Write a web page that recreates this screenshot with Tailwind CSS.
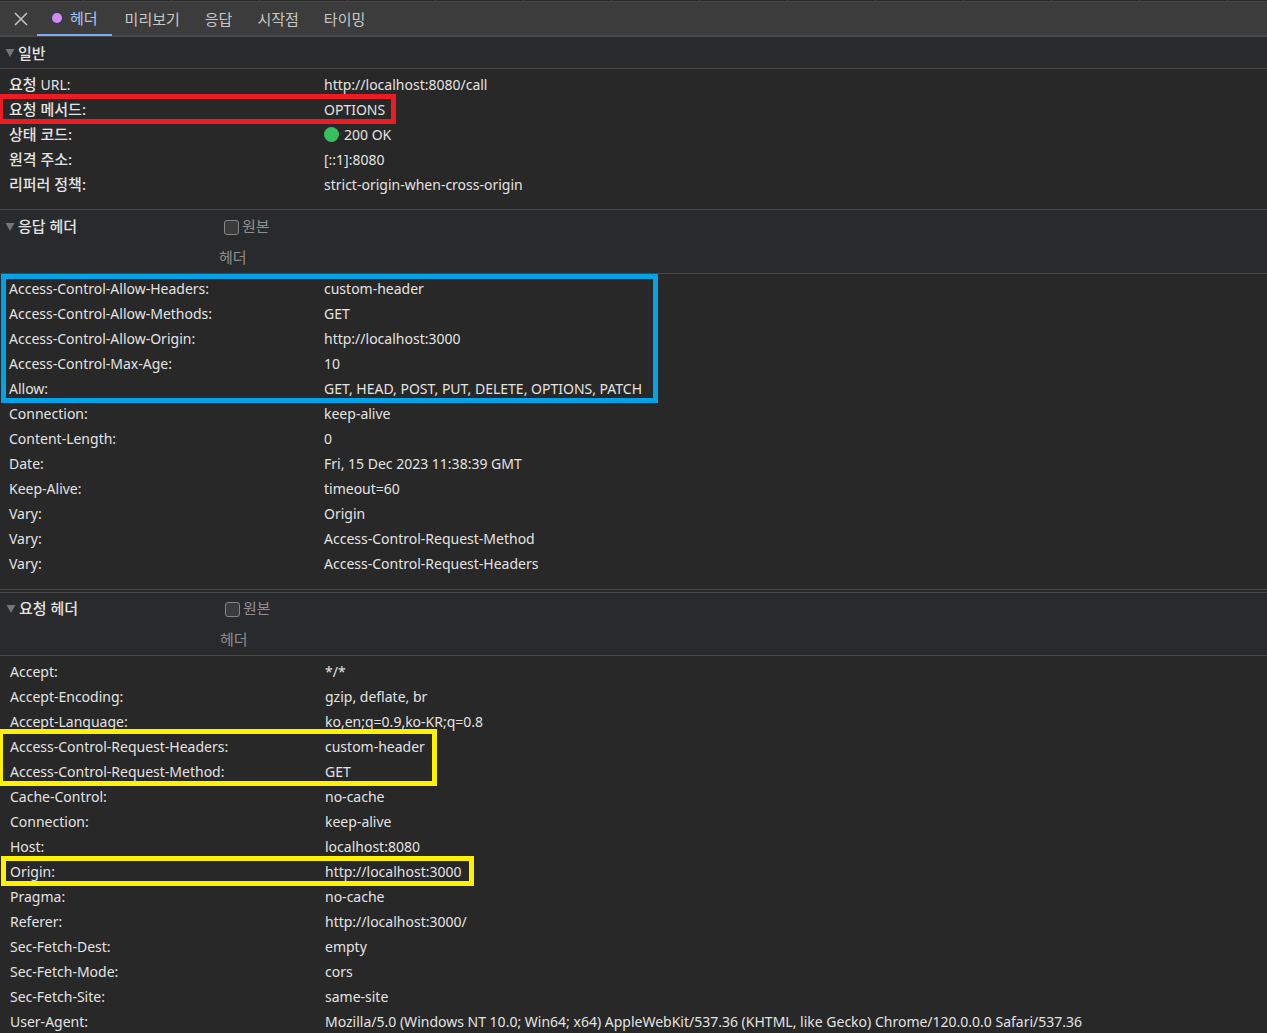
<!DOCTYPE html>
<html lang="ko">

<head>
    <meta charset="UTF-8">
    <meta name="viewport" content="width=device-width, initial-scale=1.0">
    <title>헤더 - 네트워크</title>
    <script src="https://cdn.jsdelivr.net/npm/@tailwindcss/browser@4"></script>
</head>

<body class="h-screen overflow-hidden bg-[#282828] text-[#e3e3e3] text-[15px] font-['Noto_Sans','Noto_Sans_CJK_KR',sans-serif]">
    <!-- Column edges of the request list above -->
    <div class="h-px flex gap-[87px] pl-[83px]">
        <span class="w-px bg-[#474747]"></span>
        <span class="w-px bg-[#474747]"></span>
        <span class="w-px bg-[#474747]"></span>
        <span class="w-px bg-[#474747]"></span>
        <span class="w-px bg-[#474747]"></span>
        <span class="w-px bg-[#474747]"></span>
        <span class="w-px bg-[#474747]"></span>
        <span class="w-px bg-[#474747]"></span>
        <span class="w-px bg-[#474747]"></span>
        <span class="w-px bg-[#474747]"></span>
        <span class="w-px bg-[#474747]"></span>
        <span class="w-px bg-[#474747]"></span>
        <span class="w-px bg-[#474747]"></span>
        <span class="w-px bg-[#474747]"></span>
    </div>

    <!-- Tabs -->
    <nav class="h-9 flex items-stretch gap-px border-t border-b-2 border-[#474747] bg-[#3c3c3c] text-[#c7c7c7] font-['Noto_Sans_CJK_KR',sans-serif]">
        <button aria-label="닫기" class="w-9 pl-[5px] flex items-center justify-center">
            <svg class="w-4 h-4" viewBox="0 0 16 16" fill="none" stroke="currentColor" stroke-width="1.5">
                <path d="M2 2l12 12M14 2L2 14" />
            </svg>
        </button>
        <button class="-mb-px pl-[15px] pr-[14px] flex items-center gap-2 border-b-2 border-[#7cacf8] text-[#a8c7fa]">
            <span class="w-[10px] h-[10px] rounded-full bg-[#cf8cff]"></span><span class="pt-px">헤더</span>
        </button>
        <button class="px-3 pt-px">미리보기</button>
        <button class="px-3 pt-px">응답</button>
        <button class="px-3 pt-px">시작점</button>
        <button class="px-3 pt-px">타이밍</button>
    </nav>

    <!-- General -->
    <section>
        <h2 class="border-b border-[#474747] bg-[#292a2c] font-medium">
            <button class="h-[31px] pt-px pl-[5px] flex items-center gap-[3px]">
                <svg class="w-[10px] h-2" viewBox="0 0 10 8" fill="#757575"><path d="M0.5 0h9L5 8z" /></svg>일반
            </button>
        </h2>
        <div id="general" class="pt-[3px] pb-3 pl-[9px] text-[15px] font-medium"></div>
    </section>

    <!-- Response headers -->
    <section>
        <div class="flex items-start border-y border-[#474747] bg-[#292a2c] pt-px leading-[31px]">
            <h2 class="w-[219px] font-medium">
                <button class="pl-[5px] flex items-center gap-[3px]">
                    <svg class="w-[10px] h-2" viewBox="0 0 10 8" fill="#757575"><path d="M0.5 0h9L5 8z" /></svg>응답 헤더
                </button>
            </h2>
            <label class="w-[60px] text-[#8f8f8f]"><input type="checkbox" class="appearance-none w-[15px] h-[15px] ml-[5px] mr-[3px] align-[-3px] rounded-[3px] border border-[#858585] bg-[#3b3b3b]">원본 헤더</label>
        </div>
        <div id="response" class="pt-[2px] pb-[13px] pl-[9px] text-[14px]"></div>
    </section>

    <!-- Request headers -->
    <section class="border-t border-[#474747] pt-[2px]">
        <div class="flex items-start border-y border-[#474747] bg-[#292a2c] pl-px leading-[31px]">
            <h2 class="w-[219px] font-medium">
                <button class="pl-[5px] flex items-center gap-[3px]">
                    <svg class="w-[10px] h-2" viewBox="0 0 10 8" fill="#757575"><path d="M0.5 0h9L5 8z" /></svg>요청 헤더
                </button>
            </h2>
            <label class="w-[60px] text-[#8f8f8f]"><input type="checkbox" class="appearance-none w-[15px] h-[15px] ml-[5px] mr-[3px] align-[-3px] rounded-[3px] border border-[#858585] bg-[#3b3b3b]">원본 헤더</label>
        </div>
        <div id="request" class="pt-[3px] pb-3 pl-[10px] text-[14px]"></div>
    </section>

    <script>
        // Each group is a list of rows, with an optional marker box around it
        const data = {
            general: [
                { rows: [['요청 <span class="text-[14px] font-normal">URL:</span>', 'http://localhost:8080/call']] },
                {
                    mark: '-top-[3px] -bottom-[2px] -left-[11px] w-[398px] border-[#ed1c24]',
                    rows: [['요청 메서드:', 'OPTIONS']]
                },
                {
                    rows: [
                        ['상태 코드:', '<span class="w-[15px] h-[15px] mr-[5px] rounded-full bg-[#36be5f]"></span>200 OK'],
                        ['원격 주소:', '[::1]:8080'],
                        ['리퍼러 정책:', 'strict-origin-when-cross-origin']
                    ]
                }
            ],
            response: [
                {
                    mark: '-top-[2px] -bottom-[2px] -left-2 w-[657px] border-[#00a2e8]',
                    rows: [
                        ['Access-Control-Allow-Headers:', 'custom-header'],
                        ['Access-Control-Allow-Methods:', 'GET'],
                        ['Access-Control-Allow-Origin:', 'http://localhost:3000'],
                        ['Access-Control-Max-Age:', '10'],
                        ['Allow:', 'GET, HEAD, POST, PUT, DELETE, OPTIONS, PATCH']
                    ]
                },
                {
                    rows: [
                        ['Connection:', 'keep-alive'],
                        ['Content-Length:', '0'],
                        ['Date:', 'Fri, 15 Dec 2023 11:38:39 GMT'],
                        ['Keep-Alive:', 'timeout=60'],
                        ['Vary:', 'Origin'],
                        ['Vary:', 'Access-Control-Request-Method'],
                        ['Vary:', 'Access-Control-Request-Headers']
                    ]
                }
            ],
            request: [
                {
                    rows: [
                        ['Accept:', '*/*'],
                        ['Accept-Encoding:', 'gzip, deflate, br'],
                        ['Accept-Language:', 'ko,en;q=0.9,ko-KR;q=0.8']
                    ]
                },
                {
                    mark: '-top-[5px] -bottom-[2px] -left-3 w-[439px] border-[#fff200]',
                    rows: [
                        ['Access-Control-Request-Headers:', 'custom-header'],
                        ['Access-Control-Request-Method:', 'GET']
                    ]
                },
                {
                    rows: [
                        ['Cache-Control:', 'no-cache'],
                        ['Connection:', 'keep-alive'],
                        ['Host:', 'localhost:8080']
                    ]
                },
                {
                    mark: '-top-[3px] -bottom-[2px] -left-[9px] w-[473px] border-[#fff200]',
                    rows: [['Origin:', 'http://localhost:3000']]
                },
                {
                    rows: [
                        ['Pragma:', 'no-cache'],
                        ['Referer:', 'http://localhost:3000/'],
                        ['Sec-Fetch-Dest:', 'empty'],
                        ['Sec-Fetch-Mode:', 'cors'],
                        ['Sec-Fetch-Site:', 'same-site'],
                        ['User-Agent:', 'Mozilla/5.0 (Windows NT 10.0; Win64; x64) AppleWebKit/537.36 (KHTML, like Gecko) Chrome/120.0.0.0 Safari/537.36']
                    ]
                }
            ]
        };

        Object.entries(data).forEach(([id, groups]) => {
            document.getElementById(id).innerHTML = groups.map(group => {
                const rows = group.rows.map(([name, value]) => `
                    <div class="flex h-[25px] leading-[25px] whitespace-nowrap">
                        <dt class="w-[315px] shrink-0">${name}</dt>
                        <dd class="flex items-center text-[14px] font-normal">${value}</dd>
                    </div>`
                ).join('');
                const mark = group.mark ? `<div class="absolute border-5 ${group.mark}"></div>` : '';
                return `<div class="relative"><dl>${rows}</dl>${mark}</div>`;
            }).join('');
        });
    </script>
</body>

</html>
